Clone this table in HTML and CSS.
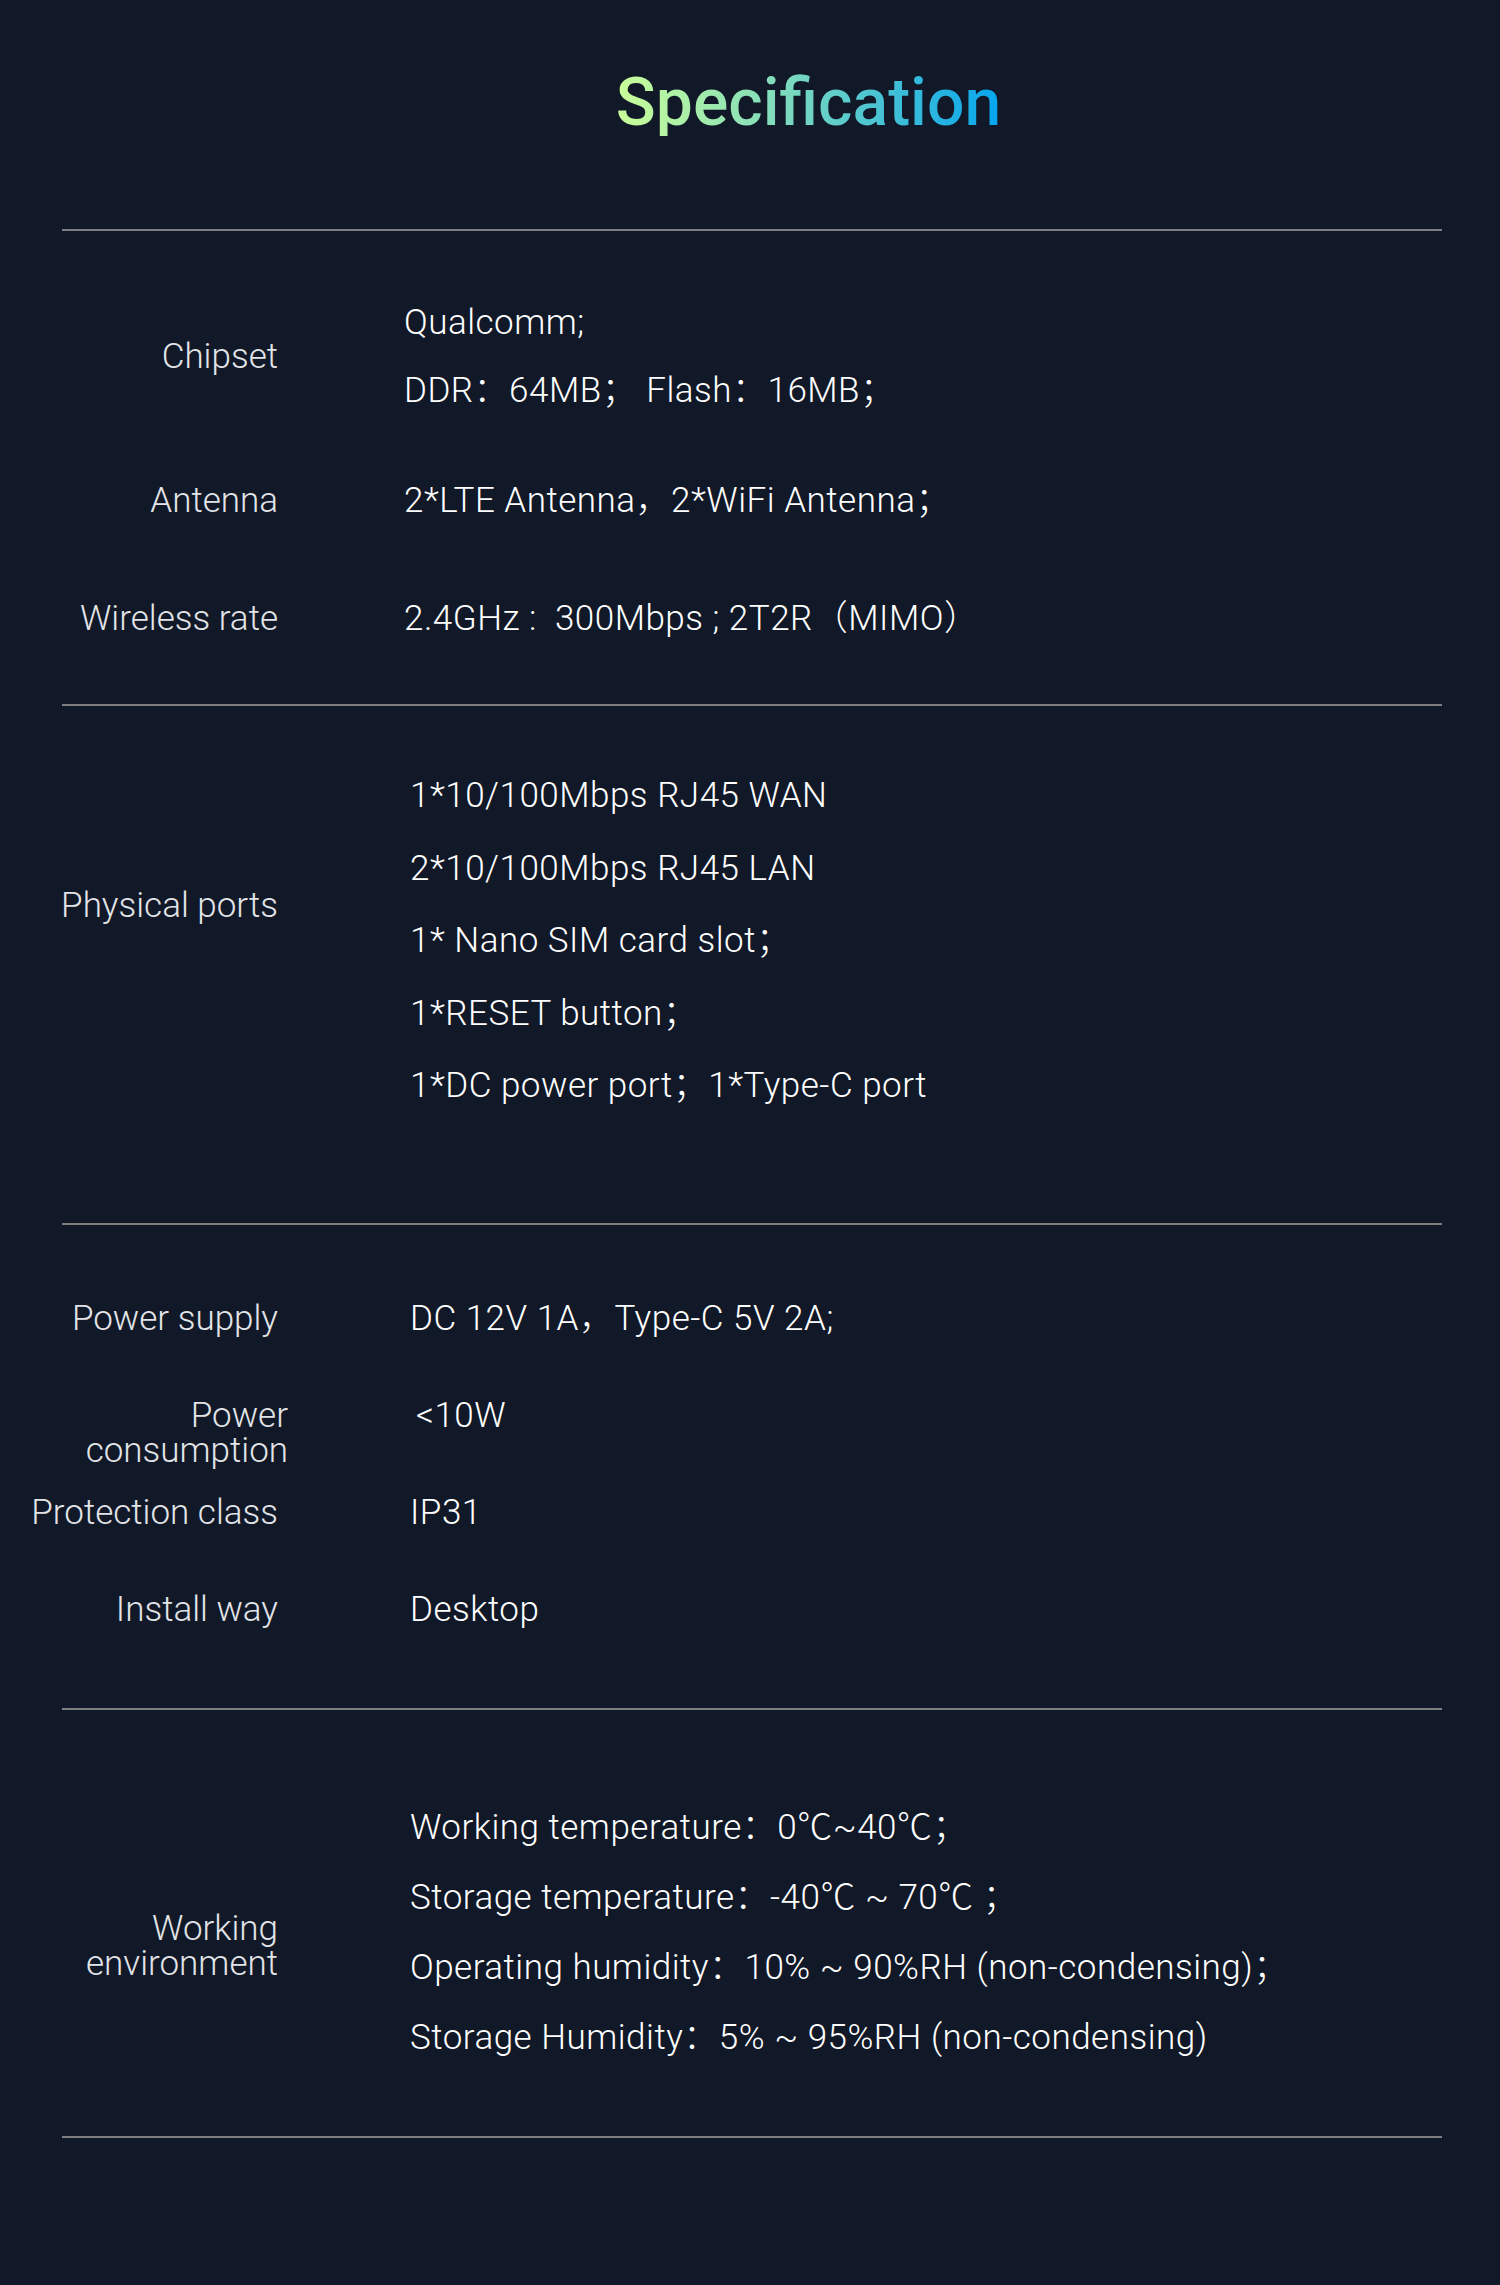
FILE: index.html
```html
<!DOCTYPE html>
<html lang="en">
<head>
<meta charset="utf-8">
<title>Specification</title>
<link rel="stylesheet" href="styles.css">
</head>
<body>
<main class="spec">
  <h1 class="spec__title"><span class="spec__title-text">Specification</span></h1>

  <hr class="spec__divider">

  <section class="spec__group spec__group--core">
    <div class="spec__row spec__row--tight">
      <div class="spec__label">Chipset</div>
      <div class="spec__values spec__values--chip">
        <p class="spec__value">Qualcomm;</p>
        <p class="spec__value">DDR：64MB；&nbsp;Flash：16MB；</p>
      </div>
    </div>
    <div class="spec__row spec__row--tight">
      <div class="spec__label">Antenna</div>
      <div class="spec__values">
        <p class="spec__value">2*LTE Antenna，2*WiFi Antenna；</p>
      </div>
    </div>
    <div class="spec__row spec__row--tight spec__row--spaced">
      <div class="spec__label">Wireless rate</div>
      <div class="spec__values">
        <p class="spec__value">2.4GHz :&nbsp; 300Mbps ; 2T2R（MIMO）</p>
      </div>
    </div>
  </section>

  <hr class="spec__divider">

  <section class="spec__group spec__group--ports">
    <div class="spec__row">
      <div class="spec__label spec__label--ports">Physical ports</div>
      <div class="spec__values spec__values--ports">
        <p class="spec__value">1*10/100Mbps RJ45 WAN</p>
        <p class="spec__value">2*10/100Mbps RJ45 LAN</p>
        <p class="spec__value">1* Nano SIM card slot；</p>
        <p class="spec__value">1*RESET button；</p>
        <p class="spec__value">1*DC power port；1*Type-C port</p>
      </div>
    </div>
  </section>

  <hr class="spec__divider">

  <section class="spec__group spec__group--power">
    <div class="spec__row spec__row--fixed">
      <div class="spec__label">Power supply</div>
      <div class="spec__values">
        <p class="spec__value">DC 12V 1A，Type-C 5V 2A;</p>
      </div>
    </div>
    <div class="spec__row spec__row--fixed">
      <div class="spec__label spec__label--wide">Power<br>consumption</div>
      <div class="spec__values">
        <p class="spec__value spec__value--inset">&lt;10W</p>
      </div>
    </div>
    <div class="spec__row spec__row--fixed">
      <div class="spec__label">Protection class</div>
      <div class="spec__values">
        <p class="spec__value">IP31</p>
      </div>
    </div>
    <div class="spec__row spec__row--fixed">
      <div class="spec__label">Install way</div>
      <div class="spec__values">
        <p class="spec__value">Desktop</p>
      </div>
    </div>
  </section>

  <hr class="spec__divider">

  <section class="spec__group spec__group--env">
    <div class="spec__row">
      <div class="spec__label spec__label--env">Working<br>environment</div>
      <div class="spec__values spec__values--env">
        <p class="spec__value">Working temperature：0℃~40℃；</p>
        <p class="spec__value">Storage temperature：-40℃ ~ 70℃ ；</p>
        <p class="spec__value">Operating humidity：10% ~ 90%RH (non-condensing)；</p>
        <p class="spec__value">Storage Humidity：5% ~ 95%RH (non-condensing)</p>
      </div>
    </div>
  </section>

  <hr class="spec__divider">
</main>
</body>
</html>
```

FILE: styles.css
```css
html, body {
  margin: 0;
  padding: 0;
}

body {
  background: #111827;
  color: #ffffff;
  font-family: Roboto, "Noto Sans CJK SC", sans-serif;
}

.spec {
  min-height: 2285px;
  box-sizing: border-box;
  padding-top: 70px;
}

.spec__title {
  margin: 0 0 93px;
  padding-left: 117px;
  text-align: center;
  font-size: 66px;
  font-weight: 500;
  line-height: 1;
}

.spec__title-text {
  display: inline-block;
  background: linear-gradient(90deg, #cbfe98 0%, #7ad9bf 45%, #05a5ef 100%);
  -webkit-background-clip: text;
  background-clip: text;
  color: transparent;
}

.spec__divider {
  display: block;
  border: 0;
  height: 2px;
  margin: 0 58px 0 62px;
  background: #7f7f7f;
}

.spec__group {
  display: flex;
  flex-direction: column;
}

.spec__group--core {
  padding: 74px 0 68px;
  gap: 75px;
}

.spec__group--ports {
  padding: 72px 0 120px;
}

.spec__group--power {
  padding: 76px 0 19px;
}

.spec__group--env {
  padding: 100px 0 81px;
}

.spec__row {
  display: grid;
  grid-template-columns: 278px 1fr;
  column-gap: 132px;
  align-items: center;
  font-size: 35px;
  line-height: 35px;
}

.spec__row--tight {
  column-gap: 126px;
}

.spec__row--spaced {
  margin-top: 8px;
}

.spec__row--fixed {
  min-height: 97px;
  align-items: start;
}

.spec__label {
  display: flex;
  justify-content: flex-end;
  text-align: right;
  white-space: nowrap;
  font-weight: 300;
  color: #e2e4e8;
}

.spec__label--wide {
  margin-right: -10px;
}

.spec__label--ports {
  align-self: start;
  margin-top: 110px;
}

.spec__label--env {
  align-self: start;
  margin-top: 101px;
}

.spec__values {
  display: flex;
  flex-direction: column;
}

.spec__values--chip {
  gap: 33px;
}

.spec__values--ports {
  gap: 37.5px;
}

.spec__values--env {
  gap: 35px;
}

.spec__value {
  margin: 0;
  white-space: nowrap;
  font-weight: 300;
  letter-spacing: 0.5px;
  color: #ffffff;
}

.spec__value--inset {
  padding-left: 6px;
}
```
